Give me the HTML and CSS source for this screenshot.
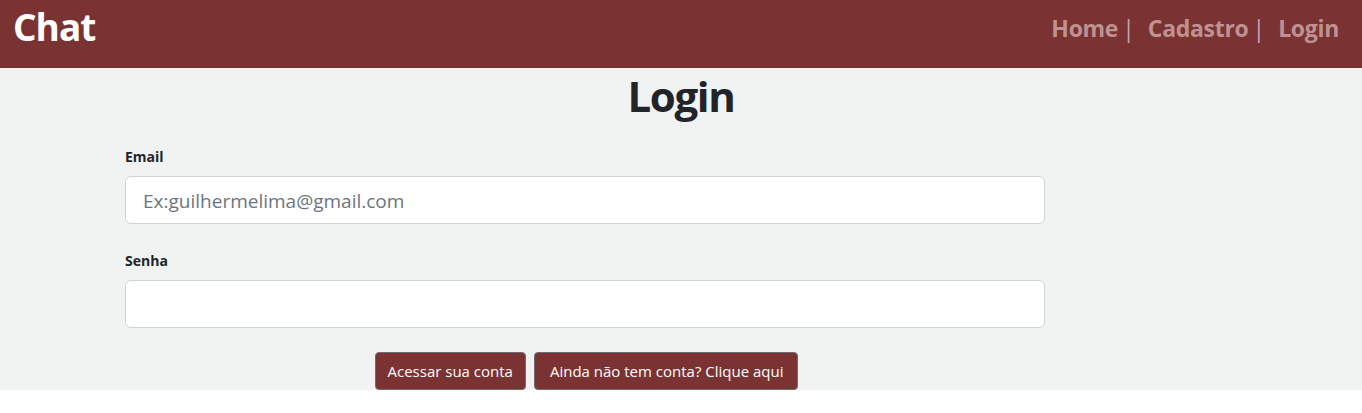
FILE: index.html
```html
<!DOCTYPE html>
<html lang="pt-BR">
<head>
<meta charset="utf-8">
<title>Chat - Login</title>
<link rel="stylesheet" href="styles.css">
</head>
<body>
<header class="navbar">
  <a class="brand" href="#">Chat</a>
  <nav class="links">
    <a class="link" href="#">Home</a><span class="sep">|</span>
    <a class="link" href="#">Cadastro</a><span class="sep">|</span>
    <a class="link" href="#">Login</a>
  </nav>
</header>
<main class="page">
  <h1 class="title">Login</h1>
  <form class="form">
    <div class="field field-first">
      <label class="label" for="email">Email</label>
      <input class="input" id="email" type="email" placeholder="Ex:guilhermelima@gmail.com">
    </div>
    <div class="field">
      <label class="label" for="senha">Senha</label>
      <input class="input" id="senha" type="password">
    </div>
    <div class="actions">
      <button class="btn" type="submit">Acessar sua conta</button>
      <button class="btn btn-wide" type="button">Ainda não tem conta? Clique aqui</button>
    </div>
  </form>
</main>
</body>
</html>
```
FILE: styles.css
```css
* { box-sizing: border-box; }
html, body { margin: 0; padding: 0; background: #ffffff; }
body {
  font-family: "Open Sans", "Noto Sans", sans-serif;
  color: #212529;
}
.navbar {
  height: 68px;
  background: #7b3232;
  display: flex;
  justify-content: space-between;
  align-items: flex-start;
  padding: 8px 23px 0 13px;
}
.brand {
  color: #ffffff;
  font-weight: 700;
  font-size: 37px;
  line-height: 38px;
  text-decoration: none;
  letter-spacing: -1px;
}
.links {
  display: flex;
  align-items: flex-start;
  margin-top: 8px;
  font-size: 23px;
  line-height: 24px;
  font-weight: 700;
}
.link {
  color: #bf9292;
  text-decoration: none;
  letter-spacing: -0.3px;
}
.sep {
  color: #c4a4b4;
  font-weight: 400;
  margin: 0 13px 0 4px;
}
.page {
  background: #f1f2f2;
  padding-top: 1px;
}
.title {
  margin: 0;
  text-align: center;
  font-size: 42px;
  line-height: 53px;
  font-weight: 700;
  color: #212529;
  letter-spacing: -1.4px;
}
.form {
  width: 920px;
  margin-left: 125px;
  padding-top: 24px;
}
.field {
  display: flex;
  flex-direction: column;
  margin-bottom: 24px;
}
.field-first { margin-bottom: 26px; }
.label {
  font-size: 14px;
  line-height: 22px;
  font-weight: 700;
  margin-bottom: 8px;
  color: #212529;
}
.input {
  height: 48px;
  width: 100%;
  border: 1px solid #ced4da;
  border-radius: 6px;
  background: #ffffff;
  padding: 9px 17px 7px;
  font-family: "Open Sans", "Noto Sans", sans-serif;
  font-size: 19px;
  line-height: 30px;
  color: #212529;
}
.input::placeholder { color: #6c757d; }
.actions {
  display: flex;
  justify-content: center;
  gap: 8px;
  padding-left: 3px;
}
.btn {
  height: 38px;
  background: #7b3232;
  color: #ffffff;
  border: 1px solid #6c6c72;
  border-radius: 4px;
  padding: 6px 12px;
  font-family: "Open Sans", "Noto Sans", sans-serif;
  font-size: 15px;
  line-height: 24px;
}
.btn-wide { padding: 6px 14px 6px 15px; }
```
